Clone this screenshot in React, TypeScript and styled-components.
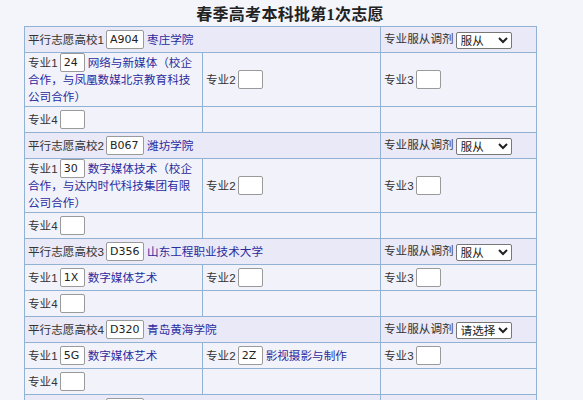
import React from 'react'
import styled, { createGlobalStyle } from 'styled-components'

const GlobalStyle = createGlobalStyle`
    html, body {
        margin: 0;
        padding: 0;
        background: #f4f5fb;
    }
    body {
        font-family: "Liberation Sans", "Noto Sans CJK SC", sans-serif;
        font-size: 11.6px;
        color: #333;
    }
`

const Page = styled('div')`
    padding: 0 0 0 24px;
    width: 512px;
`

const Title = styled('h1')`
    margin: 0;
    height: 26px;
    line-height: 30px;
    padding-left: 20px;
    text-align: center;
    font-family: "Liberation Serif", "Noto Sans CJK SC", serif;
    font-size: 16px;
    font-weight: bold;
    color: #222;
    letter-spacing: 0.3px;
`

const Grid = styled('table')`
    border-collapse: collapse;
    width: 512px;
    table-layout: fixed;
`

const Row = styled('tr')<{ $head?: boolean }>`
    background: ${({ $head }): string => $head ? '#e9e9f7' : '#f2f3fa'};
`

const Cell = styled('td')`
    border: 1px solid #91b2d2;
    padding: 1px 3px;
    height: 23px;
    line-height: 17px;
    vertical-align: middle;
`

const Label = styled('span')`
    color: #333;
    margin-right: 2px;
`

const CodeInput = styled('input')<{ $wide?: boolean }>`
    box-sizing: border-box;
    width: ${({ $wide }): string => $wide ? '38px' : '25px'};
    height: 19px;
    margin: -1px 3px -1px 0;
    padding: 0 3px;
    border: 1px solid #9a9a9a;
    border-radius: 2px;
    background: #fff;
    font-family: "DejaVu Sans", sans-serif;
    font-size: 11px;
    color: #222;
    vertical-align: top;
`

const SchoolLink = styled('a')`
    color: #2b2b9e;
    text-decoration: none;
`

const AdjustSelect = styled('select')`
    box-sizing: border-box;
    width: 56px;
    height: 17px;
    padding: 0;
    border: 1px solid #777;
    border-radius: 2px;
    background: #fff;
    font-family: "Liberation Sans", "Noto Sans CJK SC", sans-serif;
    font-size: 11.6px;
    color: #222;
    vertical-align: middle;
`

interface Major {
    code: string
    name: string
}

interface School {
    code: string
    name: string
    adjust: string
    majors: Major[]
}

const empty: Major = { code: '', name: '' }

const schools: School[] = [
    {
        code: 'A904',
        name: '枣庄学院',
        adjust: '服从',
        majors: [{ code: '24', name: '网络与新媒体（校企合作，与凤凰数媒北京教育科技公司合作）' }, empty, empty, empty],
    },
    {
        code: 'B067',
        name: '潍坊学院',
        adjust: '服从',
        majors: [{ code: '30', name: '数字媒体技术（校企合作，与达内时代科技集团有限公司合作）' }, empty, empty, empty],
    },
    {
        code: 'D356',
        name: '山东工程职业技术大学',
        adjust: '服从',
        majors: [{ code: '1X', name: '数字媒体艺术' }, empty, empty, empty],
    },
    {
        code: 'D320',
        name: '青岛黄海学院',
        adjust: '请选择',
        majors: [{ code: '5G', name: '数字媒体艺术' }, { code: '2Z', name: '影视摄影与制作' }, empty, empty],
    },
    {
        code: '',
        name: '',
        adjust: '请选择',
        majors: [empty, empty, empty, empty],
    },
]

function MajorCell({ n, major }: { n: number; major: Major }) {
    return (
        <Cell>
            <Label>专业{n}</Label>
            <CodeInput defaultValue={major.code} />
            {major.name && <SchoolLink href="#">{major.name}</SchoolLink>}
        </Cell>
    )
}

export default function App() {
    return (
        <Page>
            <GlobalStyle />
            <Title>春季高考本科批第1次志愿</Title>
            <Grid>
                <colgroup>
                    <col style={{ width: 178 }} />
                    <col style={{ width: 178 }} />
                    <col style={{ width: 156 }} />
                </colgroup>
                <tbody>
                    {schools.map((s, i) => (
                        <React.Fragment key={i}>
                            <Row $head>
                                <Cell colSpan={2}>
                                    <Label>平行志愿高校{i + 1}</Label>
                                    <CodeInput $wide defaultValue={s.code} />
                                    <SchoolLink href="#">{s.name}</SchoolLink>
                                </Cell>
                                <Cell>
                                    <Label>专业服从调剂</Label>
                                    <AdjustSelect defaultValue={s.adjust}>
                                        <option value="请选择">请选择</option>
                                        <option value="服从">服从</option>
                                        <option value="不服从">不服从</option>
                                    </AdjustSelect>
                                </Cell>
                            </Row>
                            <Row>
                                <MajorCell n={1} major={s.majors[0]} />
                                <MajorCell n={2} major={s.majors[1]} />
                                <MajorCell n={3} major={s.majors[2]} />
                            </Row>
                            <Row>
                                <MajorCell n={4} major={s.majors[3]} />
                                <Cell />
                                <Cell />
                            </Row>
                        </React.Fragment>
                    ))}
                </tbody>
            </Grid>
        </Page>
    )
}
